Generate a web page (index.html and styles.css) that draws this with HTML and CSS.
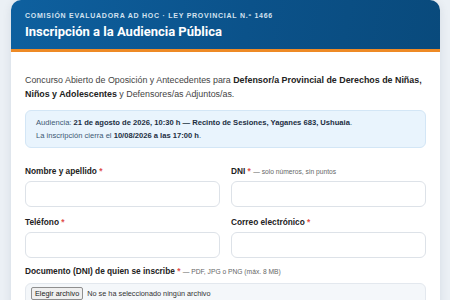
FILE: index.html
```html
<!DOCTYPE html>
<html lang="es">
<head>
    <meta charset="UTF-8">
    <meta name="viewport" content="width=device-width, initial-scale=1.0">
    <title>Inscripción a la Audiencia Pública</title>
    <link rel="stylesheet" href="styles.css">
</head>
<body>
    <div class="card">
        <div class="header">
            <div class="kicker">Comisión Evaluadora Ad Hoc · Ley Provincial N.º 1466</div>
            <h1>Inscripción a la Audiencia Pública</h1>
        </div>

        <div class="content">
            <p class="intro">Concurso Abierto de Oposición y Antecedentes para <strong>Defensor/a Provincial de Derechos de Niñas, Niños y Adolescentes</strong> y Defensores/as Adjuntos/as.</p>

            <div class="notice">
                Audiencia: <strong>21 de agosto de 2026, 10:30 h — Recinto de Sesiones, Yaganes 683, Ushuaia</strong>.<br>
                La inscripción cierra el <strong>10/08/2026 a las 17:00 h</strong>.
            </div>

            <form>
                <div class="grid">
                    <div class="field">
                        <label for="nombre">Nombre y apellido <span class="req">*</span></label>
                        <input type="text" id="nombre">
                    </div>
                    <div class="field">
                        <label for="dni">DNI <span class="req">*</span> <span class="hint">— solo números, sin puntos</span></label>
                        <input type="text" id="dni">
                    </div>
                    <div class="field">
                        <label for="tel">Teléfono <span class="req">*</span></label>
                        <input type="text" id="tel">
                    </div>
                    <div class="field">
                        <label for="mail">Correo electrónico <span class="req">*</span></label>
                        <input type="text" id="mail">
                    </div>
                </div>

                <div class="field upload">
                    <label for="doc">Documento (DNI) de quien se inscribe <span class="req">*</span> <span class="hint">— PDF, JPG o PNG (máx. 8 MB)</span></label>
                    <div class="filebox">
                        <span class="filebtn">Elegir archivo</span>
                        <span class="filename">No se ha seleccionado ningún archivo</span>
                    </div>
                </div>
            </form>
        </div>
    </div>
</body>
</html>
```

FILE: styles.css
```css
body {
    margin: 0;
    padding: 0 10px 0 11px;
    background-color: #ebf0f5;
    font-family: "Liberation Sans", Arial, sans-serif;
    color: #333;
}
.card {
    background: white;
    border-radius: 10px;
    box-shadow: 0 2px 10px rgba(20,40,70,0.1);
    overflow: hidden;
    padding-bottom: 20px;
}
.header {
    background: linear-gradient(100deg, #0e609f 0%, #0b528a 55%, #094a7c 100%);
    border-bottom: 3px solid #ee8a25;
    padding: 11px 14px 9px;
    color: white;
}
.kicker {
    font-size: 7px;
    font-weight: bold;
    letter-spacing: 0.75px;
    text-transform: uppercase;
    color: #d3e2f0;
    line-height: 10px;
}
h1 {
    margin: 3px 0 0;
    font-family: Roboto, "Liberation Sans", sans-serif;
    font-size: 13px;
    font-weight: bold;
    line-height: 16px;
}
.content {
    padding: 21px 14px 0;
}
.intro {
    margin: 0 0 9px;
    font-size: 8.9px;
    line-height: 14px;
    color: #444;
}
.intro strong {
    color: #222;
}
.notice {
    background-color: #e9f4fd;
    border: 1px solid #d3e6f6;
    border-radius: 6px;
    padding: 5px 10px;
    font-size: 7.6px;
    line-height: 13px;
    color: #3d5873;
}
.notice strong {
    color: #1c2e42;
}
.grid {
    display: grid;
    grid-template-columns: 1fr 1fr;
    column-gap: 11px;
    row-gap: 10px;
    margin-top: 18px;
}
.upload {
    margin-top: 8px;
}
label {
    display: block;
    margin-bottom: 4px;
    font-size: 8.3px;
    font-weight: bold;
    line-height: 11px;
    color: #222;
}
.upload label {
    margin-bottom: 6px;
}
.req {
    color: #e0504a;
}
.hint {
    font-weight: normal;
    font-size: 6.7px;
    color: #666;
}
input[type="text"] {
    display: block;
    box-sizing: border-box;
    width: 100%;
    height: 26px;
    border: 1px solid #dde2e8;
    border-radius: 6px;
    background: white;
}
.filebox {
    background-color: #f4f7fa;
    border: 1px solid #e3e8ee;
    border-radius: 6px;
    padding: 3px 5px 8px;
    font-size: 7.3px;
    line-height: 11px;
    color: #333;
}
.filebtn {
    display: inline-block;
    border: 1px solid #8f8f8f;
    border-radius: 2px;
    background: #efefef;
    padding: 0 3px;
    margin-right: 2px;
    color: #222;
}
```
